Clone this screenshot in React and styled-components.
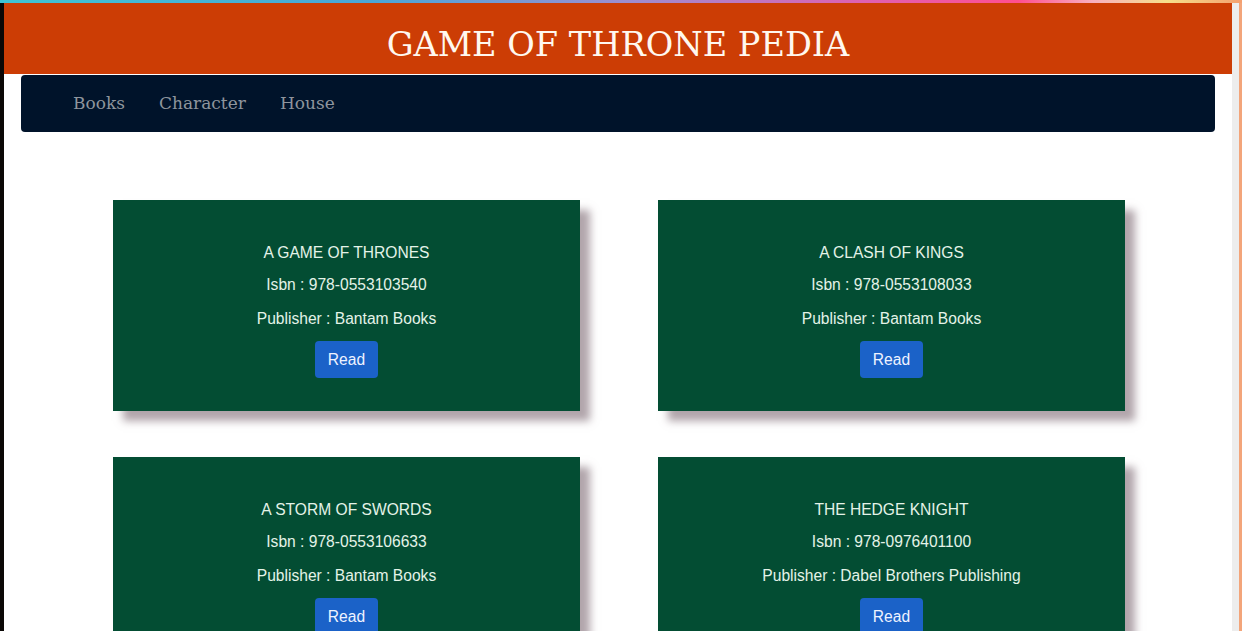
import React from 'react'
import styled, { createGlobalStyle } from 'styled-components'

const GlobalStyle = createGlobalStyle`
  html, body {
    margin: 0;
    padding: 0;
    background: #ffffff;
    font-family: "DejaVu Serif", serif;
    overflow: hidden;
  }
`

const Screen = styled.div`
  display: flex;
  flex-direction: column;
  height: 631px;
  overflow: hidden;
`

const TopStripe = styled.div`
  height: 3px;
  flex-shrink: 0;
  background: linear-gradient(90deg, #3fc4d4 0%, #4aa6d8 30%, #9b8fd0 50%, #e060b0 70%, #ff4f90 82%, #f8b0c0 88%, #f6e08a 94%, #f4a070 100%);
`

const Body = styled.div`
  display: flex;
  flex: 1;
  min-height: 0;
`

const LeftEdge = styled.div`
  width: 4px;
  flex-shrink: 0;
  background: #0b0806;
`

const Scrollbar = styled.div`
  width: 10px;
  flex-shrink: 0;
  display: flex;
  & > span:first-child {
    flex: 1;
    background: #ededed;
  }
  & > span:last-child {
    width: 3px;
    background: #f3a57a;
  }
`

const Main = styled.main`
  flex: 1;
  min-width: 0;
`

const Header = styled.header`
  height: 71px;
  background: #cc3d05;
  display: flex;
  align-items: center;
  justify-content: center;
  padding-top: 12px;
  box-sizing: border-box;
`

const Title = styled.h1`
  margin: 0;
  color: #fff8ef;
  font-family: "DejaVu Serif", serif;
  font-weight: normal;
  font-size: 33.6px;
`

const Navbar = styled.nav`
  margin: 1px 17px 0;
  height: 57px;
  background: #00132a;
  border-radius: 4px;
  display: flex;
  align-items: center;
  padding-left: 52px;
  padding-bottom: 1px;
  box-sizing: border-box;
  gap: 34px;
`

const NavLink = styled.a`
  color: #8e959d;
  font-family: "DejaVu Serif", serif;
  font-size: 17px;
  text-decoration: none;
  cursor: pointer;
`

const BookGrid = styled.section`
  width: 1012px;
  margin: 68px 0 0 109px;
  display: grid;
  grid-template-columns: 467px 467px;
  column-gap: 78px;
  row-gap: 46px;
`

const Card = styled.article`
  background: #034d33;
  height: 211px;
  box-sizing: border-box;
  padding-top: 41px;
  display: flex;
  flex-direction: column;
  align-items: center;
  box-shadow: 10px 10px 8px rgba(125, 105, 115, 0.6);
  font-family: "Liberation Sans", Arial, sans-serif;
  color: #e4f3e8;
  font-size: 15.6px;
`

const Line = styled.p`
  margin: 0 0 ${props => props.gap}px;
  line-height: 24px;
`

const ReadButton = styled.button`
  height: 37px;
  padding: 0 13px;
  border: none;
  border-radius: 4px;
  background: #1b62c8;
  color: #eef3ff;
  font-family: "Liberation Sans", Arial, sans-serif;
  font-size: 15.6px;
  cursor: pointer;
`

const books = [
  { name: 'A GAME OF THRONES', isbn: '978-0553103540', publisher: 'Bantam Books' },
  { name: 'A CLASH OF KINGS', isbn: '978-0553108033', publisher: 'Bantam Books' },
  { name: 'A STORM OF SWORDS', isbn: '978-0553106633', publisher: 'Bantam Books' },
  { name: 'THE HEDGE KNIGHT', isbn: '978-0976401100', publisher: 'Dabel Brothers Publishing' },
]

const BookCard = ({ book }) => (
  <Card>
    <Line gap={8}>{book.name}</Line>
    <Line gap={10}>Isbn : {book.isbn}</Line>
    <Line gap={10}>Publisher : {book.publisher}</Line>
    <ReadButton>Read</ReadButton>
  </Card>
)

const App = () => (
  <Screen>
    <GlobalStyle />
    <TopStripe />
    <Body>
      <LeftEdge />
      <Main>
        <Header>
          <Title>GAME OF THRONE PEDIA</Title>
        </Header>
        <Navbar>
          <NavLink>Books</NavLink>
          <NavLink>Character</NavLink>
          <NavLink>House</NavLink>
        </Navbar>
        <BookGrid>
          {books.map(book => <BookCard key={book.isbn} book={book} />)}
        </BookGrid>
      </Main>
      <Scrollbar><span /><span /></Scrollbar>
    </Body>
  </Screen>
)

export default App
